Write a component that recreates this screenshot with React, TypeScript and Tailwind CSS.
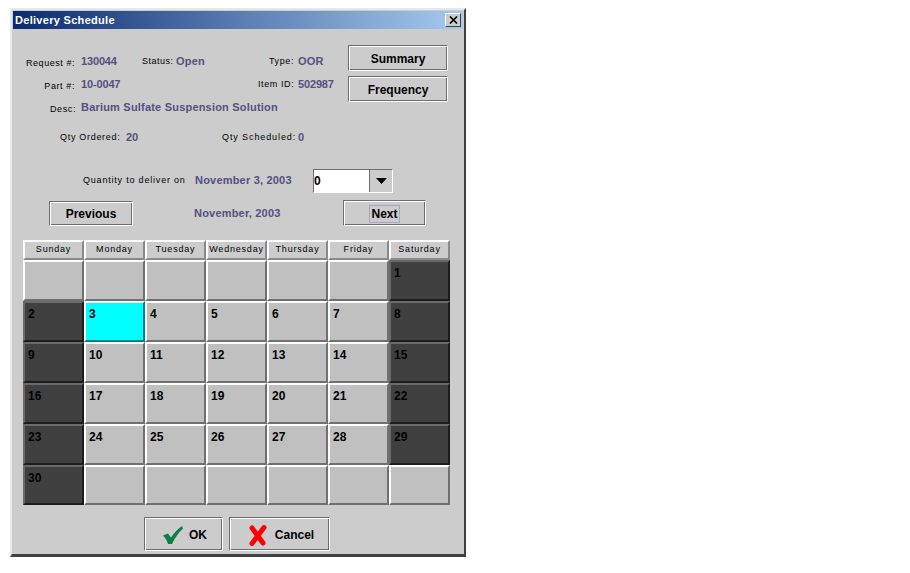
import React from "react";

const Lab = ({ children, className = "" }: { children: React.ReactNode; className?: string }) => (
  <span className={`text-[9px] leading-3 text-black whitespace-nowrap ${className}`}>{children}</span>
);
const Val = ({ children, className = "", num = false }: { children: React.ReactNode; className?: string; num?: boolean }) => (
  <span className={`text-[11px] leading-3 font-bold text-[#54507f] whitespace-nowrap ${num ? "tracking-[-0.15px]" : "tracking-[0.2px]"} ${className}`}>{children}</span>
);
const Btn = ({ children, className = "" }: { children: React.ReactNode; className?: string }) => (
  <div
    className={`flex items-center justify-center pt-[2px] border border-t-[#6f6f6f] border-l-[#6f6f6f] border-r-white border-b-white shadow-[inset_1px_1px_0_#fff,inset_-1px_-1px_0_#6f6f6f] bg-[#cccccc] text-black text-[12px] font-bold ${className}`}
  >
    {children}
  </div>
);

const days = ["Sunday", "Monday", "Tuesday", "Wednesday", "Thursday", "Friday", "Saturday"];
const cells: (number | null)[] = [
  null, null, null, null, null, null, 1,
  2, 3, 4, 5, 6, 7, 8,
  9, 10, 11, 12, 13, 14, 15,
  16, 17, 18, 19, 20, 21, 22,
  23, 24, 25, 26, 27, 28, 29,
  30, null, null, null, null, null, null,
];

const Cell = ({ n, i }: { n: number | null; i: number }) => {
  const weekend = n !== null && (i % 7 === 0 || i % 7 === 6);
  const today = n === 3;
  const cls = today
    ? "bg-[#00ffff] border-t-white border-l-white border-r-[#008080] border-b-[#008080]"
    : weekend
    ? "bg-[#404040] border-t-[#6a6a6a] border-l-[#6a6a6a] border-r-[#1c1c1c] border-b-[#1c1c1c]"
    : "bg-[#c0c0c0] border-t-white border-l-white border-r-[#707070] border-b-[#707070]";
  return (
    <div className={`border-2 pl-[3px] pt-[3px] text-[12px] leading-[16px] font-bold text-black ${cls}`}>
      {n}
    </div>
  );
};

export default function App() {
  return (
    <div className="min-h-[573px] w-[910px] bg-white font-['Liberation_Sans',Arial,sans-serif] pt-2 pl-[10px]">
      <div className="w-[456px] h-[549px] bg-[#cccccc] border-t-2 border-l-2 border-[#e8e8e8] border-r-2 border-r-[#404040] border-b-[3px] border-b-[#404040] flex flex-col">
        <div className="mt-px h-[18px] mx-px flex items-center justify-between bg-gradient-to-r from-[#0a2a6e] via-[#5b7cb0] to-[#a6caf0] pl-[2px] pr-[2px]">
          <span className="text-[11px] font-bold text-white tracking-[0.3px]">Delivery Schedule</span>
          <div className="w-4 h-[14px] flex items-center justify-center bg-[#cccccc] border border-t-white border-l-white border-r-[#404040] border-b-[#404040]">
            <svg width="9" height="8" viewBox="0 0 9 8">
              <path d="M1 0.5 L8 7.5 M8 0.5 L1 7.5" stroke="#000" strokeWidth="1.6" />
            </svg>
          </div>
        </div>

        <div className="flex pt-[16px]">
          <div className="w-[336px] shrink-0">
            <div className="flex items-center h-[12px] mt-[10px]">
              <div className="w-[63px] text-right"><Lab className="tracking-[0.55px]">Request #:</Lab></div>
              <Val num className="ml-[6px] w-[61px]">130044</Val>
              <Lab className="w-[34px] tracking-[0.5px]">Status:</Lab>
              <Val className="w-[93px]">Open</Val>
              <Lab className="w-[29px] tracking-[0.6px]">Type:</Lab>
              <Val>OOR</Val>
            </div>
            <div className="flex items-center h-[12px] mt-[11px]">
              <div className="w-[63px] text-right"><Lab className="tracking-[0.6px]">Part #:</Lab></div>
              <Val num className="ml-[6px] w-[177px]">10-0047</Val>
              <Lab className="w-[40px] tracking-[0.6px]">Item ID:</Lab>
              <Val num>502987</Val>
            </div>
            <div className="flex items-center h-[12px] mt-[11px]">
              <div className="w-[64px] text-right"><Lab className="tracking-[0.6px]">Desc:</Lab></div>
              <Val className="ml-[5px]">Barium Sulfate Suspension Solution</Val>
            </div>
          </div>
          <div className="flex flex-col gap-[5px]">
            <Btn className="w-[100px] h-[26px]">Summary</Btn>
            <Btn className="w-[100px] h-[26px]">Frequency</Btn>
          </div>
        </div>

        <div className="flex items-center h-[12px] mt-[18px] pl-[48px]">
          <Lab className="w-[66px] tracking-[0.7px]">Qty Ordered:</Lab>
          <Val num className="w-[96px]">20</Val>
          <Lab className="w-[76px] tracking-[0.9px]">Qty Scheduled:</Lab>
          <Val>0</Val>
        </div>

        <div className="flex h-[24px] mt-[26px] pl-[71px]">
          <Lab className="w-[112px] mt-[5px] tracking-[0.8px]">Quantity to deliver on</Lab>
          <Val className="w-[118px] mt-[5px]">November 3, 2003</Val>
          <div className="w-[80px] h-[24px] flex border border-t-[#6f6f6f] border-l-[#6f6f6f] border-r-white border-b-white bg-white">
            <div className="flex-1 flex items-center text-[12px] font-bold text-black border-r border-[#6f6f6f]">0</div>
            <div className="w-[22px] bg-[#cccccc] flex items-center justify-center">
              <svg width="11" height="6" viewBox="0 0 11 6"><path d="M0 0H11L5.5 6Z" fill="#000" /></svg>
            </div>
          </div>
        </div>

        <div className="flex items-center h-[26px] mt-[7px] pl-[37px]">
          <Btn className="w-[84px] h-[25px]">Previous</Btn>
          <Val className="ml-[61px] w-[149px]">November, 2003</Val>
          <Btn className="w-[83px] h-[26px]">
            <span className="border border-[#a3a3d6] px-px leading-[16px]">Next</span>
          </Btn>
        </div>

        <div className="mt-[14px] ml-[11px] w-[427px] grid grid-cols-7 grid-rows-[20px_41px_41px_41px_41px_41px_40px]">
          {days.map((d) => (
            <div
              key={d}
              className="flex items-center justify-center bg-[#cccccc] border-2 border-t-white border-l-white border-r-[#8a8a8a] border-b-[#8a8a8a] text-[9px] tracking-[0.8px] text-black whitespace-nowrap"
            >
              {d}
            </div>
          ))}
          {cells.map((n, i) => (
            <Cell key={i} n={n} i={i} />
          ))}
        </div>

        <div className="flex mt-[12px] ml-[132px] gap-[6px]">
          <Btn className="w-[79px] h-[34px] pl-[5px]">
            <svg width="20" height="18" viewBox="0 0 20 18" className="mr-[6px]">
              <path d="M0 9.5 L5 7.5 L8 11.5 C11 7 14.5 3 19 0 L20 2.5 C15.5 6.5 12 12 9 18 L5 18 C4 14.5 2.5 12 0 9.5 Z" fill="#0b7f45" />
            </svg>
            <span className="mr-[2px]">OK</span>
          </Btn>
          <Btn className="w-[101px] h-[34px] pl-[4px]">
            <svg width="18" height="21" viewBox="0 0 18 21" className="mr-[8px]">
              <path d="M3 3 L14 18 M15 2.5 L3 18.5" stroke="#ff0000" strokeWidth="5" strokeLinecap="round" fill="none" />
            </svg>
            Cancel
          </Btn>
        </div>
      </div>
    </div>
  );
}
